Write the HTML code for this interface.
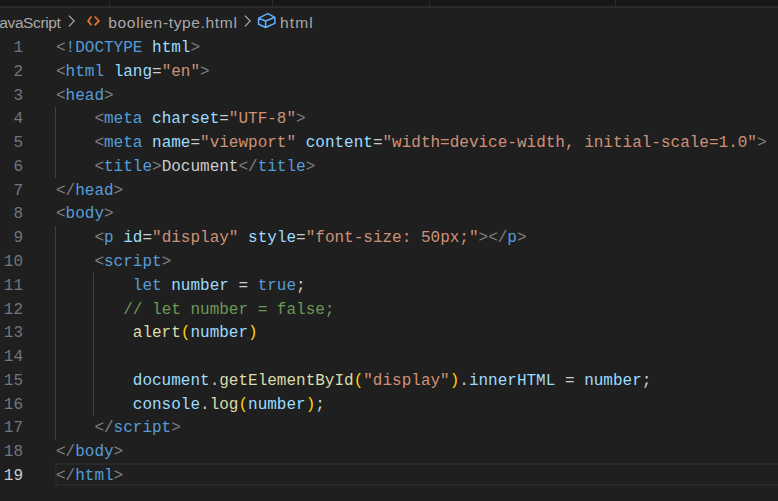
<!DOCTYPE html>
<html><head><meta charset="utf-8">
<style>
html,body{margin:0;padding:0;}
body{width:778px;height:501px;overflow:hidden;background:#1f1f1f;position:relative;font-family:"Liberation Sans",sans-serif;}
i{font-style:normal;}
#tabs{position:absolute;left:0;top:0;width:778px;height:6px;background:#181818;}
#tabs .sep{position:absolute;top:0;width:1px;height:6px;background:#2b2b2b;}
#tabline{position:absolute;left:0;top:6px;width:778px;height:1.5px;background:#2b2b2b;}
.cr{position:absolute;top:13px;white-space:pre;line-height:20px;color:#a9a9a9;font-size:15.5px;}
svg{position:absolute;}
.ln{position:absolute;left:0;width:23px;text-align:right;color:#6e7681;font-family:"Liberation Mono",monospace;font-size:16px;line-height:24px;height:24px;}
.ln.act{color:#cccccc;}
.code{position:absolute;left:56px;white-space:pre;color:#cccccc;font-family:"Liberation Mono",monospace;font-size:16px;line-height:24px;height:24px;}
.g{color:#808080}.t{color:#569cd6}.a{color:#9cdcfe}.s{color:#ce9178}.f{color:#dcdcaa}.c{color:#6a9955}.y{color:#ffd700}
.guide{position:absolute;width:1px;background:#404040;}
#hl{position:absolute;left:55px;top:463px;width:730px;height:19px;border:2px solid #282828;}
</style></head><body>
<div id="tabs">
<div class="sep" style="left:109px"></div>
<div class="sep" style="left:272px"></div>
<div class="sep" style="left:429px"></div>
<div class="sep" style="left:615px"></div>
</div>
<div id="tabline"></div>
<span class="cr" style="left:-0.7px;letter-spacing:-0.4px">avaScript</span>
<svg style="left:66px;top:13px" width="11" height="16" viewBox="0 0 11 16"><path d="M2.9 2.6 L8.2 8 L2.9 13.4" fill="none" stroke="#a9a9a9" stroke-width="1.15"/></svg>
<svg style="left:82px;top:10px" width="22" height="22" viewBox="0 0 22 22"><path d="M9.4 6.5 L6.1 10.9 L9.4 15.3 M12.7 6.5 L16.9 10.9 L12.7 15.3" fill="none" stroke="#e8702f" stroke-width="1.8"/></svg>
<span class="cr" style="left:108.3px;letter-spacing:0.656px">boolien-type.html</span>
<svg style="left:241.6px;top:13px" width="11" height="16" viewBox="0 0 11 16"><path d="M2.9 2.6 L8.2 8 L2.9 13.4" fill="none" stroke="#a9a9a9" stroke-width="1.15"/></svg>
<svg style="left:256px;top:11.9px" width="22" height="18" viewBox="0 0 22 18"><path d="M11.8 1.6 L2.6 6.1 L9.6 9 L18.9 5.3 Z M2.6 6.1 L2.6 12.3 L9.6 15.5 L18.8 11.4 L18.9 5.3 M9.6 9 L9.6 15.5" fill="none" stroke="#5cb0ff" stroke-width="1.5" stroke-linejoin="round"/></svg>
<span class="cr" style="left:279.9px;letter-spacing:1.2px">html</span>
<div class="guide" style="left:55px;top:106.84px;height:71.34px"></div>
<div class="guide" style="left:55px;top:225.74px;height:214.02px"></div>
<div class="guide" style="left:93px;top:273.30px;height:142.68px"></div>
<div id="hl"></div>
<div class="ln" style="top:36px">1</div>
<div class="ln" style="top:60px">2</div>
<div class="ln" style="top:84px">3</div>
<div class="ln" style="top:107px">4</div>
<div class="ln" style="top:131px">5</div>
<div class="ln" style="top:155px">6</div>
<div class="ln" style="top:179px">7</div>
<div class="ln" style="top:202px">8</div>
<div class="ln" style="top:226px">9</div>
<div class="ln" style="top:250px">10</div>
<div class="ln" style="top:274px">11</div>
<div class="ln" style="top:298px">12</div>
<div class="ln" style="top:321px">13</div>
<div class="ln" style="top:345px">14</div>
<div class="ln" style="top:369px">15</div>
<div class="ln" style="top:393px">16</div>
<div class="ln" style="top:416px">17</div>
<div class="ln" style="top:440px">18</div>
<div class="ln act" style="top:464px">19</div>
<div class="code" style="top:36px"><i class="g">&lt;</i><i class="t">!DOCTYPE</i> <i class="a">html</i><i class="g">&gt;</i></div>
<div class="code" style="top:60px"><i class="g">&lt;</i><i class="t">html</i> <i class="a">lang</i>=<i class="s">"en"</i><i class="g">&gt;</i></div>
<div class="code" style="top:84px"><i class="g">&lt;</i><i class="t">head</i><i class="g">&gt;</i></div>
<div class="code" style="top:107px">    <i class="g">&lt;</i><i class="t">meta</i> <i class="a">charset</i>=<i class="s">"UTF-8"</i><i class="g">&gt;</i></div>
<div class="code" style="top:131px">    <i class="g">&lt;</i><i class="t">meta</i> <i class="a">name</i>=<i class="s">"viewport"</i> <i class="a">content</i>=<i class="s">"width=device-width, initial-scale=1.0"</i><i class="g">&gt;</i></div>
<div class="code" style="top:155px">    <i class="g">&lt;</i><i class="t">title</i><i class="g">&gt;</i>Document<i class="g">&lt;/</i><i class="t">title</i><i class="g">&gt;</i></div>
<div class="code" style="top:179px"><i class="g">&lt;/</i><i class="t">head</i><i class="g">&gt;</i></div>
<div class="code" style="top:202px"><i class="g">&lt;</i><i class="t">body</i><i class="g">&gt;</i></div>
<div class="code" style="top:226px">    <i class="g">&lt;</i><i class="t">p</i> <i class="a">id</i>=<i class="s">"display"</i> <i class="a">style</i>=<i class="s">"font-size: 50px;"</i><i class="g">&gt;&lt;/</i><i class="t">p</i><i class="g">&gt;</i></div>
<div class="code" style="top:250px">    <i class="g">&lt;</i><i class="t">script</i><i class="g">&gt;</i></div>
<div class="code" style="top:274px">        <i class="t">let</i> <i class="a">number</i> = <i class="t">true</i>;</div>
<div class="code" style="top:298px">       <i class="c">// let number = false;</i></div>
<div class="code" style="top:321px">        <i class="f">alert</i><i class="y">(</i><i class="a">number</i><i class="y">)</i></div>
<div class="code" style="top:369px">        <i class="a">document</i>.<i class="f">getElementById</i><i class="y">(</i><i class="s">"display"</i><i class="y">)</i>.<i class="a">innerHTML</i> = <i class="a">number</i>;</div>
<div class="code" style="top:393px">        <i class="a">console</i>.<i class="f">log</i><i class="y">(</i><i class="a">number</i><i class="y">)</i>;</div>
<div class="code" style="top:416px">    <i class="g">&lt;/</i><i class="t">script</i><i class="g">&gt;</i></div>
<div class="code" style="top:440px"><i class="g">&lt;/</i><i class="t">body</i><i class="g">&gt;</i></div>
<div class="code" style="top:464px"><i class="g">&lt;/</i><i class="t">html</i><i class="g">&gt;</i></div>
</body></html>
